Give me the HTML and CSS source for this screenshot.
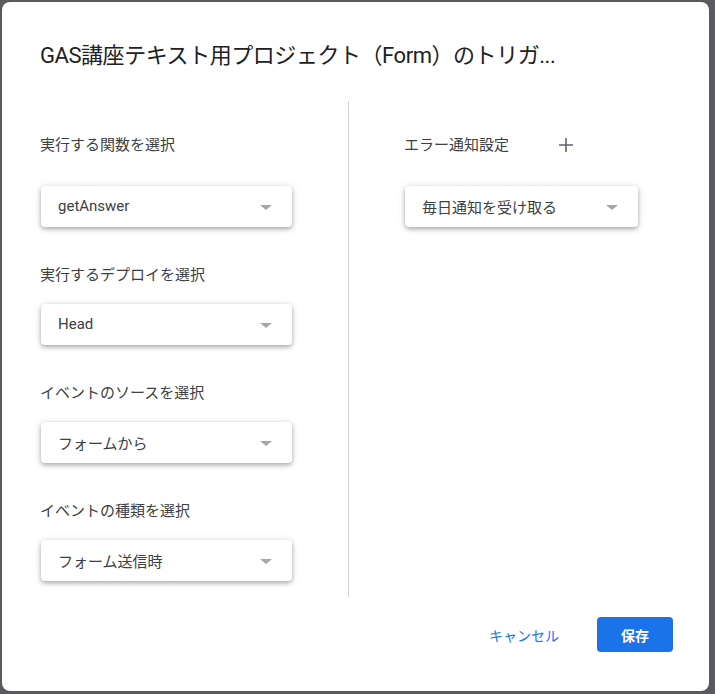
FILE: index.html
```html
<!DOCTYPE html>
<html lang="ja">
<head>
<meta charset="utf-8">
<link rel="stylesheet" href="styles.css">
</head>
<body>
<div class="dialog">
  <h1 class="title">GAS講座テキスト用プロジェクト（Form）のトリガ...</h1>
  <div class="content">
    <div class="col col-left">
      <div class="field field-first">
        <div class="label">実行する関数を選択</div>
        <div class="select select-wide"><span class="value">getAnswer</span><span class="arrow"></span></div>
      </div>
      <div class="field">
        <div class="label">実行するデプロイを選択</div>
        <div class="select select-wide"><span class="value">Head</span><span class="arrow"></span></div>
      </div>
      <div class="field">
        <div class="label">イベントのソースを選択</div>
        <div class="select select-wide"><span class="value">フォームから</span><span class="arrow"></span></div>
      </div>
      <div class="field">
        <div class="label">イベントの種類を選択</div>
        <div class="select select-wide"><span class="value">フォーム送信時</span><span class="arrow"></span></div>
      </div>
    </div>
    <div class="col col-right">
      <div class="field field-first">
        <div class="label label-row">エラー通知設定
          <span class="plus"><svg width="16" height="16" viewBox="0 0 16 16"><path d="M8 1v14M1 8h14" stroke="#5f6368" stroke-width="1.6" fill="none"/></svg></span>
        </div>
        <div class="select select-narrow"><span class="value">毎日通知を受け取る</span><span class="arrow"></span></div>
      </div>
    </div>
  </div>
  <div class="footer">
    <button class="btn btn-text">キャンセル</button>
    <button class="btn btn-primary">保存</button>
  </div>
</div>
</body>
</html>
```
FILE: styles.css
```css
html, body {
  margin: 0;
  padding: 0;
}
body {
  background: #5a595e;
  width: 715px;
  height: 694px;
  overflow: hidden;
  font-family: Roboto, "Noto Sans CJK JP", sans-serif;
}
.dialog {
  margin: 2px 0 0 2px;
  width: 707px;
  height: 689px;
  background: #fff;
  border-radius: 8px;
  box-sizing: border-box;
  padding: 38px 0 0 38px;
}
.title {
  margin: 0;
  font-size: 22px;
  line-height: 32px;
  font-weight: 400;
  color: #202124;
  letter-spacing: -0.45px;
}
.content {
  display: flex;
  margin-top: 29px;
}
.col-left {
  width: 308px;
  border-right: 1px solid #d0d0d6;
  padding: 22px 0 16px 0;
}
.col-right {
  padding: 22px 0 0 55px;
}
.field {
  display: flex;
  flex-direction: column;
  align-items: flex-start;
  margin-top: 38px;
}
.field:first-child {
  margin-top: 0;
}
.label {
  font-size: 15px;
  line-height: 20px;
  color: #3c4043;
  padding-top: 12px;
  margin-bottom: 19px;
}
.field + .field .label {
  padding-top: 0;
}
.field-first .label {
  margin-bottom: 31px;
}
.label-row {
  display: flex;
  align-items: center;
}
.plus {
  display: inline-flex;
  margin-left: 49px;
}
.select {
  height: 41px;
  box-sizing: border-box;
  display: flex;
  align-items: center;
  justify-content: space-between;
  padding: 0 20px 1px 17px;
  margin-left: 1px;
  border-radius: 4px;
  background: #fff;
  box-shadow: 0 2px 4px rgba(0,0,0,0.28), 0 1px 8px rgba(0,0,0,0.12);
  font-size: 15px;
  color: #3c4043;
}
.select-wide {
  width: 251px;
}
.select-narrow {
  width: 233px;
}
.arrow {
  width: 0;
  height: 0;
  border-left: 6px solid transparent;
  border-right: 6px solid transparent;
  border-top: 5px solid #a6a6a6;
  margin-top: 2px;
}
.footer {
  display: flex;
  justify-content: flex-end;
  align-items: center;
  padding-right: 36px;
  margin-top: 20px;
}
.btn {
  font-family: Roboto, "Noto Sans CJK JP", sans-serif;
  font-size: 14px;
  height: 35px;
  border: none;
  border-radius: 4px;
  cursor: pointer;
}
.btn-text {
  background: transparent;
  color: #1a73e8;
  padding: 0 16px;
  margin-right: 22px;
}
.btn-primary {
  background: #1a73e8;
  color: #fff;
  font-weight: 700;
  width: 76px;
  padding: 0;
}
```
